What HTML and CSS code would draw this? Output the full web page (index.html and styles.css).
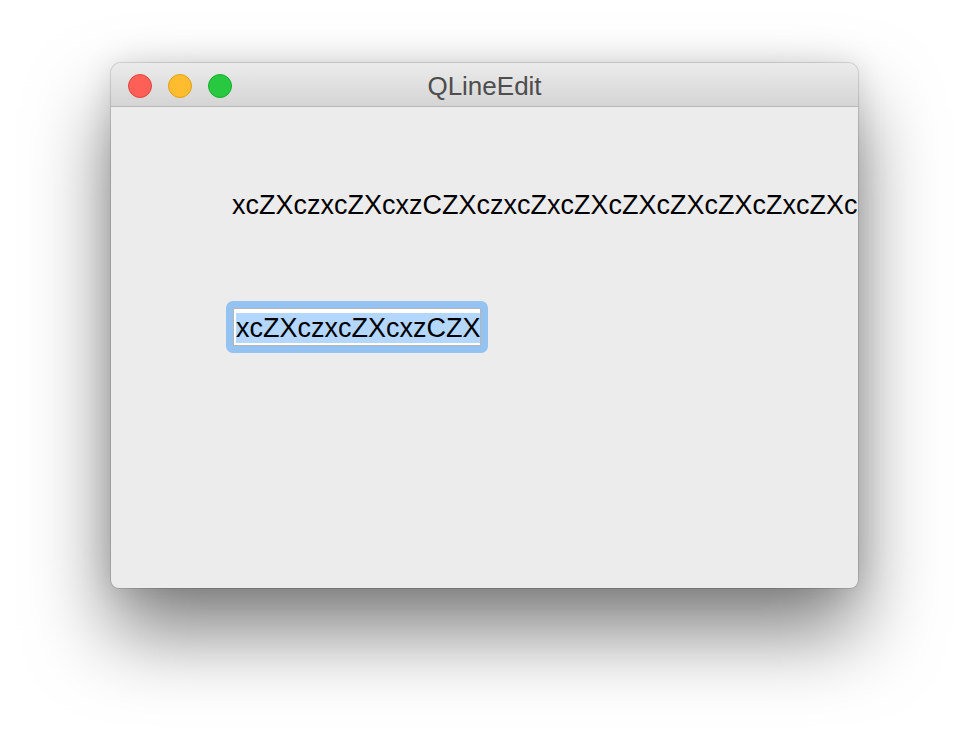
FILE: index.html
```html
<!DOCTYPE html>
<html lang="en">
<head>
  <meta charset="UTF-8" />
  <title>QLineEdit</title>
  <link rel="stylesheet" href="styles.css">
</head>
<body>
  <div class="window">
    <div class="titlebar">
      <div class="lights">
        <span class="light close"></span>
        <span class="light minimize"></span>
        <span class="light zoom"></span>
      </div>
      <div class="title">QLineEdit</div>
    </div>

    <div class="content">
      <div class="label">xcZXczxcZXcxzCZXczxcZxcZXcZXcZXcZXcZxcZXcZXczxcZ</div>

      <div class="focus-ring">
        <div class="line-edit"><span class="selected">xcZXczxcZXcxzCZX</span></div>
      </div>
    </div>
  </div>
</body>
</html>
```

FILE: styles.css
```css
html {
  background: #ffffff;
}

body {
  margin: 0;
  padding: 63px 0 160px 111px;
  min-height: 748px;
  box-sizing: border-box;
  background: #ffffff;
  font-family: 'Liberation Sans', Arial, sans-serif;
}

.window {
  width: 747px;
  height: 525px;
  border-radius: 10px 10px 8px 8px;
  background: #ececec;
  overflow: hidden;
  box-shadow: 0 0 0 1px rgba(0, 0, 0, 0.12), 0 0 30px rgba(0, 0, 0, 0.12), 0 44px 80px rgba(0, 0, 0, 0.5);
}

.titlebar {
  position: relative;
  height: 43px;
  background: linear-gradient(to bottom, #ebebeb, #d5d5d5);
  border-bottom: 1px solid #b8b8b8;
  display: flex;
  align-items: center;
  justify-content: center;
}

.lights {
  position: absolute;
  left: 17px;
  top: 11px;
  display: flex;
  gap: 16px;
}

.light {
  width: 22px;
  height: 22px;
  border-radius: 50%;
  border: 1px solid rgba(0, 0, 0, 0.12);
}

.close { background: #fe5f57; border-color: #e2463f; }
.minimize { background: #febc2e; border-color: #e1a116; }
.zoom { background: #28c840; border-color: #14ae2e; }

.title {
  font-size: 26px;
  color: #4d4d4d;
  margin-top: 4px;
}

.content {
  padding: 82px 0 0 121px;
}

.label {
  font-size: 27px;
  line-height: 32px;
  color: #000000;
  white-space: nowrap;
  overflow: hidden;
}

.focus-ring {
  width: 248px;
  height: 38px;
  margin: 80px 0 0 -6px;
  padding: 7px;
  border-radius: 7px;
  background: #94c2f1;
}

.line-edit {
  box-sizing: border-box;
  height: 38px;
  padding: 3px 1px 0 2px;
  border: 1px solid #b5b5b5;
  background: #ffffff;
  overflow: hidden;
  white-space: nowrap;
  font-size: 27px;
  line-height: 32px;
  color: #000000;
}

.selected {
  background: #b3d7ff;
}
```
